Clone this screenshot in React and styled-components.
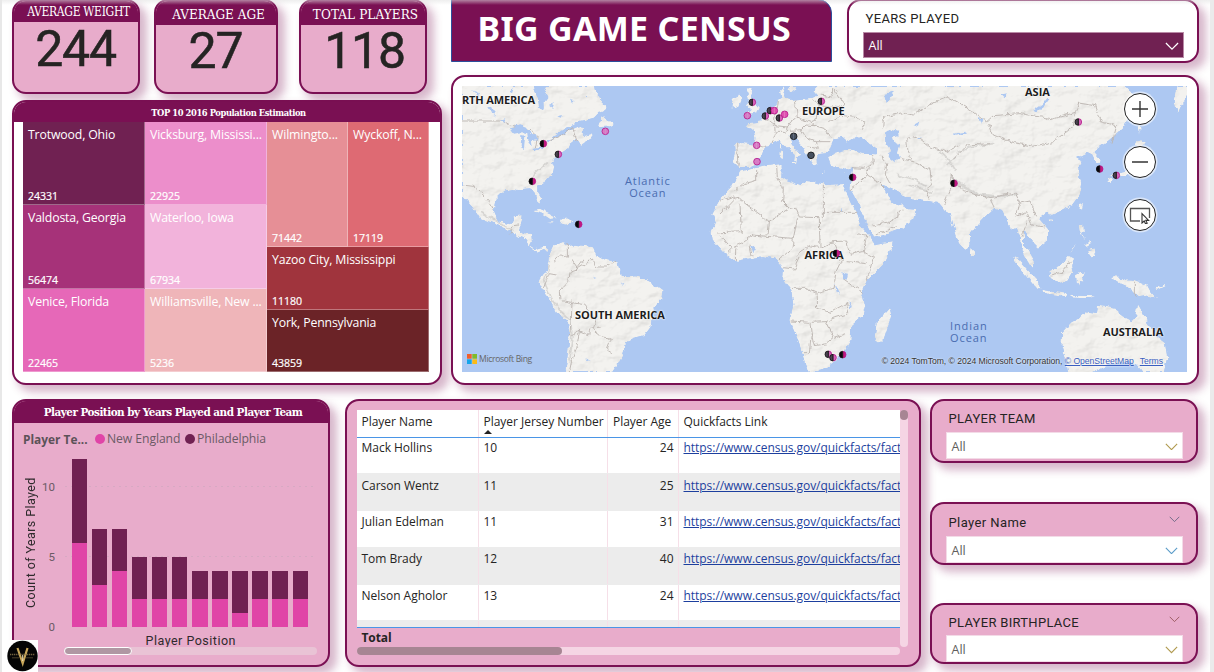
import React from "react";
import styled, { createGlobalStyle } from "styled-components";

const c = {
  wine: "#7a1053",
  plum: "#702152",
  pink: "#e8accb",
  hot: "#e044a7",
  ink: "#252423",
  water: "#adc8f2",
  land: "#f3f2ef",
};
const din = `"Roboto", "Liberation Sans", sans-serif`;
const segoe = `"Open Sans", "Noto Sans", sans-serif`;
const serif = `"DejaVu Serif Condensed", "DejaVu Serif", serif`;

const GlobalStyle = createGlobalStyle`
  * { box-sizing: border-box; }
  body { margin: 0; background: #fff; font-family: ${segoe}; overflow: hidden; }
`;

const Page = styled.main`
  position: relative;
  width: 1214px;
  height: 672px;
  overflow: hidden;
  padding-left: 9.5px;
  border-left: 2px solid #e8e8e8;
  border-right: 4px solid #ebebeb;
  background: #fff;
  &::after {
    content: "";
    position: absolute;
    inset: 0 0 auto 0;
    height: 5px;
    background: linear-gradient(rgba(225, 225, 225, 0.55), rgba(255, 255, 255, 0));
  }
`;
const Upper = styled.div`
  display: flex;
  gap: 10px;
  height: 399px;
`;
const Lower = styled.div`
  display: flex;
  align-items: flex-start;
`;
const LeftColumn = styled.div`
  width: 429px;
`;
const RightColumn = styled.div`
  width: 748px;
`;
const Panel = styled.section`
  display: flex;
  flex-direction: column;
  flex: none;
  overflow: hidden;
  width: ${(p) => p.$w}px;
  height: ${(p) => p.$h}px;
  margin: ${(p) => p.$margin || 0};
  border: 2.5px solid ${c.wine};
  border-radius: ${(p) => p.$radius || 14}px;
  background: ${(p) => (p.$white ? "#fff" : c.pink)};
  box-shadow: 6px 6px 9px 1px rgba(122, 16, 83, 0.3);
`;
const PanelTitle = styled.h2`
  flex: none;
  display: flex;
  align-items: center;
  justify-content: center;
  height: ${(p) => p.$h}px;
  margin: 0;
  padding: ${(p) => p.$pad || 0};
  background: ${c.wine};
  color: #fff;
  font: ${(p) => p.$weight || 400} ${(p) => p.$size}px/1 ${serif};
  letter-spacing: ${(p) => p.$track || 0}px;
  white-space: nowrap;
`;

/* KPI cards */
const CardRow = styled.div`
  display: flex;
  align-items: flex-start;
  height: 100px;
`;
const CardValue = styled.div`
  padding: ${(p) => p.$top}px 0 0 ${(p) => p.$left || 0}px;
  text-align: center;
  color: ${c.ink};
  font: 400 50px/50px ${din};
  letter-spacing: -1.2px;
  -webkit-text-stroke: 0.5px ${c.ink};
`;

/* Treemap */
const Treemap = styled.div`
  display: grid;
  grid-template-columns: 122px 122px 81px 81px;
  grid-template-rows: repeat(12, 1fr);
  width: 406px;
  height: 250px;
  margin: 0 auto 0 9.5px;
`;
const Tile = styled.div`
  grid-column: ${(p) => p.$col};
  grid-row: ${(p) => p.$row};
  display: flex;
  flex-direction: column;
  justify-content: space-between;
  min-width: 0;
  padding: 4px 0 0 5px;
  background: ${(p) => p.$bg};
  border: solid rgba(255, 255, 255, 0.33);
  border-width: 0 1px 1px 0;
  color: #fff;
`;
const TileName = styled.span`
  white-space: nowrap;
  font-size: 12.3px;
  line-height: 18px;
  letter-spacing: -0.16px;
`;
const TileValue = styled.span`
  font-size: 10.6px;
  line-height: 15px;
  letter-spacing: -0.05px;
  -webkit-text-stroke: 0.2px #fff;
`;

/* Header */
const HeaderRow = styled.header`
  display: flex;
  height: 75px;
`;
const Banner = styled.h1`
  width: 381px;
  height: 63px;
  margin: -1px 15px 0 0;
  padding-left: 26px;
  background: ${c.wine};
  border: 1px solid #2c4f9c;
  border-radius: 0 14px 0 0;
  color: #fff;
  font: 700 34px/56px "Noto Sans", ${segoe};
  letter-spacing: 0.3px;
  white-space: nowrap;
`;

/* Slicers */
const SlicerHead = styled.div`
  display: flex;
  justify-content: space-between;
  height: ${(p) => p.$h}px;
  padding: ${(p) => p.$top}px 16px 0 17px;
  color: ${c.ink};
  font: 400 13px/16px ${din};
  letter-spacing: ${(p) => p.$track}px;
`;
const Select = styled.div`
  flex: none;
  display: flex;
  align-items: center;
  justify-content: space-between;
  height: ${(p) => p.$h || 27}px;
  margin: 0 13px 0 14px;
  padding: 3px 4px 0 5px;
  border: 1px solid ${(p) => (p.$dark ? "#b98aa6" : "#f3dbe7")};
  background: ${(p) => (p.$dark ? c.plum : "#fff")};
  color: ${(p) => (p.$dark ? "#fff" : "#605e5c")};
  font-size: 12.5px;
  line-height: 18px;
`;
const SlicerColumn = styled.div`
  display: flex;
  flex-direction: column;
  margin-left: 9px;
`;
const ChevronSvg = styled.svg`
  flex: none;
  margin-top: ${(p) => p.$mt || 0}px;
`;

/* Map */
const MapFrame = styled.div`
  position: relative;
  width: 725px;
  height: 286px;
  margin: 8.5px 0 0 9.5px;
  overflow: hidden;
  background: ${c.water};
`;
const MapSvg = styled.svg`
  display: block;
`;
const PinLayer = styled.svg`
  position: absolute;
  inset: 0;
`;
const MapButtons = styled.div`
  position: absolute;
  top: 7px;
  right: 31px;
  display: flex;
  flex-direction: column;
  gap: 21px;
`;
const RoundButton = styled.button`
  display: grid;
  place-items: center;
  width: 32px;
  height: 32px;
  padding: 0;
  border: 1.5px solid #222;
  border-radius: 50%;
  background: #fff;
  box-shadow: 0 0 0 1.5px rgba(255, 255, 255, 0.55);
`;
const MapLabel = styled.span`
  position: absolute;
  left: ${(p) => p.$x}px;
  top: ${(p) => p.$y}px;
  color: ${(p) => (p.$sea ? "#4a6cb0" : "#1d1d1d")};
  font-size: 11px;
  font-weight: ${(p) => (p.$sea ? 400 : 700)};
  line-height: 12px;
  letter-spacing: ${(p) => p.$track ?? 0}px;
  text-align: center;
  white-space: pre;
  ${(p) => !p.$sea && "text-shadow: 0 0 2px #fff, 0 0 2px #fff;"}
`;
const MapCredit = styled.div`
  position: absolute;
  right: 24px;
  bottom: 5px;
  color: #333;
  font: 8.6px/12px "Liberation Sans", sans-serif;
  letter-spacing: -0.03px;
  white-space: pre;
  text-shadow: 0 0 2px #fff;
  a { color: #3b5fc0; text-decoration: underline; text-decoration-thickness: 0.5px; }
  a + a { margin-left: 6px; }
`;
const BingBrand = styled.div`
  position: absolute;
  left: 5px;
  bottom: 8px;
  display: flex;
  align-items: center;
  gap: 2px;
  color: #666;
  font-size: 8.6px;
  line-height: 10px;
  letter-spacing: -0.35px;
`;

/* Bar chart */
const Legend = styled.div`
  display: flex;
  align-items: center;
  height: 32px;
  padding-left: 9.5px;
  color: #6b5a65;
  font-size: 12.2px;
  line-height: 18px;
  white-space: nowrap;
  b { width: 72px; color: #5c5258; font-size: 11.9px; }
`;
const LegendItem = styled.span`
  display: flex;
  align-items: center;
  gap: 2px;
  width: 90px;
  letter-spacing: -0.08px;
  &::before {
    content: "";
    width: 10px;
    height: 10px;
    border-radius: 50%;
    background: ${(p) => p.$color};
  }
`;
const PlotRow = styled.div`
  display: flex;
  height: 172px;
`;
const AxisTitle = styled.div`
  height: 20px;
  padding: 6px 0 0 132px;
  color: #2e2a2c;
  font: 400 12.5px/16px ${din};
  letter-spacing: 0.5px;
  white-space: nowrap;
`;
const VerticalTitle = styled(AxisTitle)`
  writing-mode: vertical-rl;
  transform: rotate(180deg);
  width: 16px;
  height: 153px;
  margin-left: 9px;
  padding: 0;
  letter-spacing: 0.4px;
`;
const Ticks = styled.div`
  display: flex;
  flex-direction: column;
  justify-content: space-between;
  width: 16.5px;
  margin: 25px 0 -7px;
  color: #6b5a65;
  font: 400 11.5px/14px ${din};
  text-align: right;
`;
const Plot = styled.div`
  display: flex;
  align-items: flex-end;
  gap: 4.6px;
  width: 252px;
  height: 172px;
  margin-left: 8px;
  padding-left: 8.5px;
  background-image: radial-gradient(circle, #d7a9c3 0.7px, transparent 0.9px), radial-gradient(circle, #d7a9c3 0.7px, transparent 0.9px);
  background-size: 6px 3px, 6px 3px;
  background-position: 0 30px, 0 100px;
  background-repeat: repeat-x;
`;
const Bar = styled.div`
  display: flex;
  flex-direction: column;
  width: 15.5px;
`;
const Segment = styled.div`
  height: ${(p) => p.$n * 14}px;
  background: ${(p) => (p.$top ? c.plum : c.hot)};
`;
const Track = styled.div`
  flex: none;
  width: ${(p) => p.$w}px;
  height: ${(p) => p.$h || 8}px;
  margin: ${(p) => p.$margin || 0};
  border-radius: 4px;
  background: ${(p) => p.$bg || "#f5d5e4"};
`;
const Thumb = styled.div`
  width: ${(p) => p.$w}px;
  height: ${(p) => p.$h || 8}px;
  border-radius: 4px;
  border: ${(p) => (p.$outlined ? "1px solid #fff" : "0")};
  background: ${(p) => (p.$outlined ? "#b097a3" : "#a78593")};
`;

/* Table */
const TableBody = styled.div`
  display: flex;
  padding: 8.5px 0 0 10px;
`;
const Grid = styled.div`
  width: 543px;
  height: 237px;
  overflow: hidden;
`;
const Row = styled.div`
  display: grid;
  grid-template-columns: 122px 129.5px 70.5px 221px;
  height: ${(p) => p.$h}px;
  background: ${(p) => (p.$alt ? "#ececec" : "#fff")};
  border-bottom: 1px solid ${(p) => (p.$head || p.$last ? "#4a95e6" : "#ececec")};
`;
const Cell = styled.div`
  position: relative;
  padding: ${(p) => p.$top}px 4px 0 5px;
  border-right: 1px solid #f6dfe8;
  color: ${c.ink};
  font-size: 12px;
  line-height: 18px;
  letter-spacing: -0.02px;
  text-align: ${(p) => (p.$right ? "right" : "left")};
  white-space: nowrap;
  &:last-child { border-right: 0; padding-right: 0; }
  a { color: #1d3f9e; text-decoration: underline; letter-spacing: -0.04px; }
`;
const SortMark = styled.i`
  position: absolute;
  left: 5px;
  bottom: 3px;
  border: solid transparent;
  border-width: 0 4px 4px;
  border-bottom-color: #222;
`;
const TotalRow = styled.div`
  padding: 0 5px;
  color: ${c.ink};
  font-size: 12px;
  font-weight: 700;
  line-height: 19px;
  letter-spacing: -0.1px;
`;

const Logo = styled.svg`
  position: absolute;
  left: 5px;
  top: 640px;
  background: #fff;
`;

const Chevron = ({ color = "#777", w = 13, mt }) => (
  <ChevronSvg $mt={mt} width={w} height={w * 0.6} viewBox="0 0 13 8" fill="none" stroke={color} strokeWidth="1.15">
    <path d="M.7 1 6.5 6.8 12.3 1" />
  </ChevronSvg>
);

const tiles = [
  ["Trotwood, Ohio", 24331, "#702152", "1", "1 / 5"],
  ["Valdosta, Georgia", 56474, "#a63279", "1", "5 / 9"],
  ["Venice, Florida", 22465, "#e668b8", "1", "9 / 13"],
  ["Vicksburg, Mississi...", 22925, "#ec8ecb", "2", "1 / 5"],
  ["Waterloo, Iowa", 67934, "#f2b3db", "2", "5 / 9"],
  ["Williamsville, New ...", 5236, "#efb5b9", "2", "9 / 13"],
  ["Wilmingto...", 71442, "#e68f96", "3", "1 / 7"],
  ["Wyckoff, N...", 17119, "#de6a73", "4", "1 / 7"],
  ["Yazoo City, Mississippi", 11180, "#a0343d", "3 / 5", "7 / 10"],
  ["York, Pennsylvania", 43859, "#6b2327", "3 / 5", "10 / 13"],
];

const bars = [[6, 6], [3, 4], [4, 3], [2, 3], [2, 3], [2, 3], [2, 2], [2, 2], [1, 3], [2, 2], [2, 2], [2, 2]];

const players = [
  ["Mack Hollins", 10, 24, 36, 1],
  ["Carson Wentz", 11, 25, 37, 3],
  ["Julian Edelman", 11, 31, 37, 2],
  ["Tom Brady", 12, 40, 37, 2],
  ["Nelson Agholor", 13, 24, 36, 2],
];

const americas = [
  "M36 33H252L256 52 264 72 268 98 274 105 284 98 283 78 292 66 284 50 290 33H432L436 50 452 66 455 82 470 96 462 106 448 112 432 128 410 134 388 138 372 150 350 158 322 178 300 196 330 184 352 172 376 158 396 152 402 160 392 172 404 182 426 176 432 184 412 196 394 210 386 204 378 192 358 208 352 222 330 236 316 248 304 262 310 276 306 296 288 318 262 334 262 350 274 370 271 385 262 378 253 352 240 340 218 342 204 346 186 342 160 348 136 372 132 408 146 438 176 446 188 442 194 424 215 420 211 448 204 462 220 474 244 476 246 500 240 512 256 522 282 514 296 524 292 532 282 522 262 530 240 516 222 490 190 478 160 458 122 442 88 428 66 392 40 362 36 366Z",
  "M300 538 312 512 340 500 348 512 362 508 398 512 428 516 438 540 460 552 502 562 512 596 524 606 562 604 604 622 638 646 634 672 608 704 602 756 584 780 546 790 528 806 520 836 500 872 488 891H345L352 848 358 790 354 742 322 714 302 676 282 650 268 626 276 604 290 582 298 560Z",
  "M450 142 460 122 466 134 488 142 486 156 468 152 446 154Z",
  "M245 408 270 404 300 418 322 430 300 432 276 416Z M332 432 352 430 372 440 350 446 328 442Z M290 443 308 441 306 446Z",
];
const oldWorld = [
  "M102 206 128 204 160 208 166 192 160 166 136 154 150 146 172 144 190 122 204 108 222 96 232 74 244 70 240 50 252 36 256 50 250 66 268 74 300 72 338 68 352 60 340 46 352 33H1278L1300 60 1298 100 1270 160 1230 196 1194 220 1184 232 1202 252 1200 268 1188 262 1176 238 1160 234 1140 244 1126 250 1148 262 1132 284 1146 330 1140 358 1116 390 1082 408 1056 420 1036 414 1016 430 1044 462 1044 494 1016 518 998 500 982 476 972 470 972 510 986 532 1002 560 1002 578 984 562 968 528 962 490 950 458 936 464 922 440 904 404 884 398 864 416 834 448 810 480 812 510 796 528 778 510 760 450 752 418 734 408 714 384 668 374 620 368 600 350 566 336 548 330 558 346 574 380 596 388 608 384 620 402 650 404 640 432 606 460 560 478 522 488 508 460 482 400 456 352 448 340 456 298 460 276 434 284 410 278 392 268 384 246 404 236 448 224 490 236 532 238 530 218 494 194 470 182 440 200 424 186 402 190 392 214 384 234 352 238 354 268 344 272 322 244 308 214 284 186 266 184 276 206 304 240 292 244 290 262 282 258 284 240 258 216 240 196 216 206 198 212 188 238 168 266 146 276 114 276 98 262 104 234Z",
  "M120 290 150 282 196 274 236 268 246 278 244 302 262 316 302 330 318 318 342 320 384 332 432 330 440 352 464 402 482 452 508 484 524 508 578 498 576 516 552 566 500 618 486 650 496 694 488 722 454 752 452 798 430 836 400 862 378 880 328 890 316 868 302 820 290 786 268 736 280 690 274 646 246 610 250 578 226 552 190 544 160 548 110 558 74 534 38 494 34 472 46 440 36 416 60 372 96 336Z",
  "M568 698 574 722 552 790 536 806 524 786 530 742Z",
  "M140 40 156 40 152 56 168 84 180 98 172 112 136 120 152 104 138 92 146 74Z",
  "M98 68 118 58 126 72 118 94 94 98Z",
  "M262 33H292L288 44 270 56Z",
  "M238 228 247 226 246 252 238 250Z M240 206 246 206 245 222 240 220Z M268 260 288 262 284 270Z M362 288 380 290 364 292Z M428 292 440 290 434 296Z",
  "M814 518 826 530 822 544 812 540Z",
  "M938 548 958 556 988 590 1014 618 1022 642 1000 630 972 596Z",
  "M1024 644 1060 650 1102 656 1100 664 1052 658 1026 652Z M1110 662 1140 662 1190 664 1170 670 1120 668Z",
  "M1048 588 1076 576 1106 542 1122 550 1114 574 1118 592 1102 618 1078 624 1052 610Z",
  "M1128 600 1140 594 1160 592 1146 604 1154 620 1142 618 1138 632 1130 622Z",
  "M1136 448 1150 444 1152 466 1146 478 1160 494 1148 486 1138 466Z M1164 526 1184 520 1188 540 1176 546 1168 536Z M1150 506 1160 510 1172 498 1178 506 1162 518Z M1110 526 1130 508 1112 530Z",
  "M1140 386 1150 384 1146 404 1138 402Z M1050 430 1062 430 1056 440Z",
  "M1232 606 1252 600 1262 612 1304 614 1340 628 1352 650 1372 672 1340 662 1318 666 1296 642 1264 628Z M1366 640 1396 626 1394 634 1370 646Z",
  "M1086 772 1114 742 1140 728 1162 710 1190 714 1194 692 1222 696 1258 704 1262 722 1294 738 1308 728 1314 688 1328 712 1342 742 1372 784 1394 800 1402 846 1392 891H1328L1308 868 1284 860 1220 872 1180 891H1104L1096 850 1084 808Z",
  "M1226 300 1246 294 1276 288 1306 272 1314 236 1322 240 1326 262 1320 286 1290 298 1262 304 1250 312 1240 302Z M1222 312 1232 306 1236 314 1228 322 1222 320Z M1306 212 1318 190 1338 206 1322 218Z M1314 140 1322 160 1320 182Z",
  "M1424 80 1432 33H1461V60L1440 100 1434 116Z",
];
const lakes = [
  "M180 160 206 150 232 160 242 178 216 172 192 176Z M214 180 226 182 222 222 212 216Z M232 176 258 178 262 196 246 198 248 214 236 204Z M250 222 284 214 282 220 256 230Z M282 196 300 194 296 202Z M150 134 166 130 162 144Z M112 96 124 92 136 122 126 120Z M66 46 92 56 84 62Z M300 92 312 88 308 98Z M362 76 374 78 366 86Z M322 124 336 120 332 128Z M400 64 414 60 410 68Z M176 46 190 40 186 52Z M426 602 440 606 432 608Z M512 622 524 630 518 632Z M406 850 422 856 412 858Z",
];
const oldLakes = [
  "M554 176 572 164 592 170 596 182 578 188 584 204 600 212 594 230 600 252 584 262 566 246 570 222 556 204Z",
  "M424 592 444 596 440 614 426 610Z M404 620 410 648 420 660 416 646Z M444 678 452 706 456 694Z M426 394 430 412 426 412Z M154 516 166 512 160 536Z",
  "M1000 104 1026 86 1042 66 1050 70 1032 94 1010 110Z M552 60 580 52 574 66 560 84Z M640 150 658 140 654 156Z M758 176 800 170 800 176 764 182Z M904 60 920 54 914 70Z M650 190 672 186 660 192Z M838 128 850 134 846 150Z",
];
const borders = [
  "M36 138H160L180 150 244 168 262 186 256 220M300 196 330 184 368 158 380 196M36 330 70 334 92 352 118 380 132 406M178 478 190 452 204 450M312 560 330 538 352 550 352 508M360 592 356 620 328 650 330 676 362 682 404 690 420 710 440 730 428 762 456 786 484 790 470 826 486 836M404 552 380 584 402 570 424 552 440 576 470 576 498 556M360 592 384 584 362 552M366 676 364 740 358 782 388 768 416 782 420 760 450 756M388 768 380 820 364 862 358 891M320 600 298 596 280 640",
];
const oldBorders = [
  "M110 206 114 274M162 208 198 214M190 124 224 152 226 176 216 204M232 76 224 132 228 152 262 156 270 140 292 126 286 74M292 126 330 142 348 134 354 92 340 70M262 156 256 172 232 172M270 166 304 164 318 150 344 152 372 160 388 184M304 164 320 190 346 200 352 220 322 216M330 142 344 152M362 60 396 66 398 40M354 92 420 98 432 84 398 40M388 140 420 120 470 128 494 140 484 164M346 200 388 200",
  "M104 362 206 438 268 400 290 406 298 426 358 428 360 518M104 362 60 378M104 362 102 376 60 420M120 386 124 470 46 474M170 284 170 316 130 326 104 346M230 272 232 306 250 340 248 380 268 400M370 328 370 440M370 412H472M206 438 200 484 160 480 128 504 108 512 106 552M200 484 280 490 292 432M280 490 276 520 240 552M292 540 328 512 360 518 398 500 440 498 450 538 490 530 520 548 500 618M398 500 410 530 424 556 408 590 402 640 348 654 316 640 276 640M348 654 350 700 390 712 440 684 446 716 404 728 378 740 330 742 272 738M330 742 334 776 328 836 312 836M334 776 342 812 380 806 402 788 378 740M402 788 436 776M490 530 500 480 468 476M440 560 500 566M428 610 488 652M250 578 284 582 300 546M156 544 150 512M74 496 96 520 80 536M60 480 78 508",
  "M456 278 490 280 520 268 518 240M470 330 502 300 536 320 556 340M502 300 508 276M450 344 470 330M540 242 560 268 556 300 570 326M520 450 570 440 596 420 610 400M530 480 590 452M602 250 640 260 690 286 694 320 680 346 690 374M640 260 624 230 620 190 650 184 690 216 740 230 780 210M548 160 550 128 610 112 640 120 690 88 740 64 790 92 820 110 860 140 880 122 960 116 1060 132 1126 112 1136 84 1184 92 1200 140 1250 152 1236 206M1126 112 1120 154 1060 200 1000 214 930 200 880 180 866 144M760 250 800 210 870 206M750 296 790 350 870 368 946 354 960 384 950 420M750 296 752 342 730 390M870 372 884 400M960 384 990 378 1010 424M950 424 980 410 996 450 1034 456M966 488 980 440M1306 614 1306 668M1054 600 1086 592 1112 560",
];
const relief = [
  "M752 302 780 330 820 356 866 366 920 362 952 358M768 312 800 340 840 358 900 364M620 330 660 340 700 352M590 300 640 312 680 336M770 232 810 216 880 206M740 270 770 240M720 230 750 260 770 290",
];
const reliefAmericas = ["M298 570 282 620 306 672 330 706 362 736 366 780 360 860M250 300 290 262M90 410 150 444 190 468"];

const pins = [
  [280, 206, "k"], [325, 238, "g"], [247, 319, "k"], [386, 448, "k"], [466, 169, "p"],
  [907, 82, "g"], [892, 122, "p"], [961, 107, "g"], [973, 107, "h"], [946, 123, "g"], [988, 129, "g"], [1004, 118, "h"],
  [1114, 79, "g"], [1031, 184, "d"], [1083, 241, "d"], [920, 211, "p"], [921, 260, "p"], [1208, 307, "k"],
  [1512, 325, "k"], [1159, 535, "k"], [1135, 838, "g"], [1149, 848, "g"], [1178, 839, "k"],
  [1885, 141, "g"], [1949, 282, "k"], [1999, 301, "g"],
];
const pinFill = { k: ["#08040a", "#c2187f"], g: ["#4a4350", "#d565b8"], p: ["#d87cc4", "#d87cc4"], h: ["#e050b0", "#e050b0"], d: ["#46505f", "#46505f"] };

function Pin({ x, y, kind }) {
  const [left, right] = pinFill[kind];
  const split = kind === "k" || kind === "g";
  const leftEdge = kind === "p" || kind === "h" ? "#b5178a" : "#111";
  const rightEdge = kind === "d" ? "#111" : "#b5178a";
  return (
    <g transform={`translate(${x} ${y})`} strokeWidth="2.4">
      <path d="M0-10A10 10 0 0 0 0 10" fill={left} stroke={leftEdge} />
      <path d="M0-10A10 10 0 0 1 0 10" fill={right} stroke={rightEdge} />
      {split && <path d="M0-10V10" stroke="#111" strokeWidth="3" />}
    </g>
  );
}

function Region({ land, water, lines, hills }) {
  return (
    <>
      <g filter="url(#terrain)">
        {land.map((d) => <path key={d} d={d} fill={c.land} />)}
      </g>
      <g fill="none" filter="url(#rough)">
        {hills.map((d) => <path key={d} d={d} stroke="#b9b6b3" strokeWidth="5" opacity="0.45" />)}
        {lines.map((d) => <path key={d} d={d} stroke="#bcb6b2" strokeWidth="2.8" />)}
        {water.map((d) => <path key={d} d={d} fill={c.water} />)}
      </g>
    </>
  );
}

function WorldMap() {
  return (
    <MapFrame>
      <MapSvg width="725" height="286" viewBox="36 33 2175 858" strokeLinejoin="round">
        <defs>
          <filter id="rough" filterUnits="userSpaceOnUse" x="-800" y="0" width="3100" height="920">
            <feTurbulence type="fractalNoise" baseFrequency="0.05" numOctaves="3" seed="4" result="n" />
            <feDisplacementMap in="SourceGraphic" in2="n" scale="16" xChannelSelector="R" yChannelSelector="G" />
          </filter>
          <filter id="terrain" filterUnits="userSpaceOnUse" x="-800" y="0" width="3100" height="920" colorInterpolationFilters="sRGB">
            <feTurbulence type="fractalNoise" baseFrequency="0.05" numOctaves="3" seed="4" result="n" />
            <feDisplacementMap in="SourceGraphic" in2="n" scale="16" xChannelSelector="R" yChannelSelector="G" result="shape" />
            <feTurbulence type="fractalNoise" baseFrequency="0.014 0.02" numOctaves="4" seed="9" result="h" />
            <feDiffuseLighting in="h" surfaceScale="7" diffuseConstant="1.12" lightingColor="#fff" result="lit">
              <feDistantLight azimuth="225" elevation="62" />
            </feDiffuseLighting>
            <feComposite in="shape" in2="lit" operator="arithmetic" k1="0.3" k2="0.7" result="shaded" />
            <feComposite in="shaded" in2="shape" operator="in" />
          </filter>
        </defs>
        <Region land={americas} water={lakes} lines={borders} hills={reliefAmericas} />
        <g transform="translate(750 0)">
          <Region land={oldWorld} water={oldLakes} lines={oldBorders} hills={relief} />
        </g>
      </MapSvg>
      <MapLabel $x={0} $y={8} $track={-0.15}>RTH AMERICA</MapLabel>
      <MapLabel $x={113} $y={223} $track={-0.05}>SOUTH AMERICA</MapLabel>
      <MapLabel $x={340} $y={19} $track={-0.2}>EUROPE</MapLabel>
      <MapLabel $x={342.5} $y={163}>AFRICA</MapLabel>
      <MapLabel $x={563} $y={0}>ASIA</MapLabel>
      <MapLabel $x={641} $y={240} $track={-0.05}>AUSTRALIA</MapLabel>
      <MapLabel $sea $x={163} $y={89} $track={0.9}>{"Atlantic\nOcean"}</MapLabel>
      <MapLabel $sea $x={488} $y={234} $track={0.9}>{"Indian\nOcean"}</MapLabel>
      <PinLayer width="725" height="286" viewBox="36 33 2175 858" fill="none">
        {pins.map(([x, y, kind]) => <Pin key={`${x}-${y}`} x={x} y={y} kind={kind} />)}
      </PinLayer>
      <BingBrand>
        <svg width="10" height="10" viewBox="0 0 10 10">
          <path fill="#f25f2c" d="M0 0h4.7v4.7H0z" />
          <path fill="#80bb2b" d="M5.3 0H10v4.7H5.3z" />
          <path fill="#16a5ea" d="M0 5.3h4.7V10H0z" />
          <path fill="#fbba16" d="M5.3 5.3H10V10H5.3z" />
        </svg>
        Microsoft Bing
      </BingBrand>
      <MapCredit>
        © 2024 TomTom, © 2024 Microsoft Corporation, <a>© OpenStreetMap</a><a>Terms</a>
      </MapCredit>
      <MapButtons>
        <RoundButton aria-label="Zoom in">
          <svg width="18" height="18" viewBox="0 0 18 18" stroke="#333" strokeWidth="1.4"><path d="M9 1v16M1 9h16" /></svg>
        </RoundButton>
        <RoundButton aria-label="Zoom out">
          <svg width="18" height="18" viewBox="0 0 18 18" stroke="#333" strokeWidth="1.6"><path d="M1 9h16" /></svg>
        </RoundButton>
        <RoundButton aria-label="Select area">
          <svg width="22" height="18" viewBox="0 0 22 18" fill="none" stroke="#555" strokeWidth="1.3">
            <path d="M11 15H1.5V2.5H20.5V12" />
            <path d="M13 7.5V17L15.2 15 16.6 18 18.2 17.2 16.8 14.4H19.6Z" fill="#fff" stroke="#333" strokeWidth="1.1" />
          </svg>
        </RoundButton>
      </MapButtons>
    </MapFrame>
  );
}

const Slicer = ({ title, h, headH, top, track, margin, menu, arrow }) => (
  <Panel $w={268} $h={h} $margin={margin}>
    <SlicerHead $h={headH} $top={top} $track={track}>
      {title}
      {menu && <Chevron w={11} mt={1} color={menu} />}
    </SlicerHead>
    <Select>All<Chevron color={arrow} /></Select>
  </Panel>
);

export default function App() {
  return (
    <Page>
      <GlobalStyle />
      <Upper>
        <LeftColumn>
          <CardRow>
            <Panel $w={128} $h={95} $margin="-1px 14px 0 0">
              <PanelTitle $h={20.5} $size={12} $pad="2px 0 0 6px" $track={-0.32}>AVERAGE WEIGHT</PanelTitle>
              <CardValue $top={2}>244</CardValue>
            </Panel>
            <Panel $w={124} $h={95} $margin="-1px 21px 0 0">
              <PanelTitle $h={23.5} $size={13.4} $pad="4px 0 0 6px" $track={0}>AVERAGE AGE</PanelTitle>
              <CardValue $top={1}>27</CardValue>
            </Panel>
            <Panel $w={128} $h={95} $margin="-1px 0 0">
              <PanelTitle $h={23.5} $size={13.4} $pad="4px 0 0 6px" $track={0.1}>TOTAL PLAYERS</PanelTitle>
              <CardValue $top={1} $left={4}>118</CardValue>
            </Panel>
          </CardRow>
          <Panel $white $w={430} $h={284.5}>
            <PanelTitle $h={20} $size={9.3} $weight={700} $pad="2px 0 0 4px" $track={-0.42}>TOP 10 2016 Population Estimation</PanelTitle>
            <Treemap>
              {tiles.map(([name, value, bg, col, row]) => (
                <Tile key={name} $bg={bg} $col={col} $row={row}>
                  <TileName>{name}</TileName>
                  <TileValue>{value}</TileValue>
                </Tile>
              ))}
            </Treemap>
          </Panel>
        </LeftColumn>
        <RightColumn>
          <HeaderRow>
            <Banner>BIG GAME CENSUS</Banner>
            <Panel $white $w={352} $h={63.5} $margin="-1px 0 0">
              <SlicerHead $h={30.5} $top={10} $track={0.35}>YEARS PLAYED</SlicerHead>
              <Select $dark $h={26}>All<Chevron color="#fff" w={14} /></Select>
            </Panel>
          </HeaderRow>
          <Panel $white $w={748} $h={309.5}>
            <WorldMap />
          </Panel>
        </RightColumn>
      </Upper>
      <Lower>
        <Panel $w={318} $h={268}>
          <PanelTitle $h={21.5} $size={11.6} $weight={700} $pad="3px 0 0 5px" $track={-0.5}>Player Position by Years Played and Player Team</PanelTitle>
          <Legend>
            <b>Player Te...</b>
            <LegendItem $color={c.hot}>New England</LegendItem>
            <LegendItem $color={c.plum}>Philadelphia</LegendItem>
          </Legend>
          <PlotRow>
            <VerticalTitle>Count of Years Played</VerticalTitle>
            <Ticks><span>10</span><span>5</span><span>0</span></Ticks>
            <Plot>
              {bars.map(([low, high], i) => (
                <Bar key={i}><Segment $top $n={high} /><Segment $n={low} /></Bar>
              ))}
            </Plot>
          </PlotRow>
          <AxisTitle>Player Position</AxisTitle>
          <Track $w={253} $bg="#e9c3d5" $margin="0 0 0 50.5px"><Thumb $w={68} $outlined /></Track>
        </Panel>
        <Panel $w={576} $h={268} $margin="0 0 0 15px">
          <TableBody>
            <div>
              <Grid>
                <Row $h={28} $head>
                  <Cell $top={3}>Player Name</Cell>
                  <Cell $top={3}>Player Jersey Number<SortMark /></Cell>
                  <Cell $top={3}>Player Age</Cell>
                  <Cell $top={3}>Quickfacts Link</Cell>
                </Row>
                {players.map(([name, jersey, age, h, top], i) => (
                  <Row key={name} $h={h} $alt={i % 2 === 1}>
                    <Cell $top={top}>{name}</Cell>
                    <Cell $top={top}>{jersey}</Cell>
                    <Cell $top={top} $right>{age}</Cell>
                    <Cell $top={top}><a>https://www.census.gov/quickfacts/fact</a></Cell>
                  </Row>
                ))}
                <Row $h={7} $alt $last><Cell /><Cell /><Cell /><Cell /></Row>
                <TotalRow>Total</TotalRow>
              </Grid>
              <Track $w={543}><Thumb $w={205} /></Track>
            </div>
            <Track $w={8} $h={237}><Thumb $w={8} $h={10} /></Track>
          </TableBody>
        </Panel>
        <SlicerColumn>
          <Slicer title="PLAYER TEAM" h={64} headH={30.5} top={10} track={0.25} arrow="#b09a4e" />
          <Slicer title="Player Name" h={62.5} headH={31.5} top={11} track={0.4} margin="39px 0 0" menu="#6f6a86" arrow="#5b9cc9" />
          <Slicer title="PLAYER BIRTHPLACE" h={61.5} headH={30.5} top={10} track={0.3} margin="38px 0 0" menu="#9a5a5f" arrow="#b09a4e" />
        </SlicerColumn>
      </Lower>
      <Logo width="31" height="32" viewBox="0 0 31 32">
        <circle cx="15.5" cy="16" r="15.2" fill="#050505" />
        <path d="M10.5 8 15.7 23.5 20.5 8" fill="none" stroke="#c9a75a" strokeWidth="2.2" />
        <path d="M15.7 21V15" stroke="#f0e6c0" strokeWidth="1" />
        <path d="M3 14.5H28" stroke="#8f7b4e" strokeWidth="1.6" strokeDasharray="1.2 .7" opacity=".8" />
        <path d="M5 17.8H12M19 17.8H26" stroke="#8f7b4e" strokeWidth=".5" />
      </Logo>
    </Page>
  );
}
